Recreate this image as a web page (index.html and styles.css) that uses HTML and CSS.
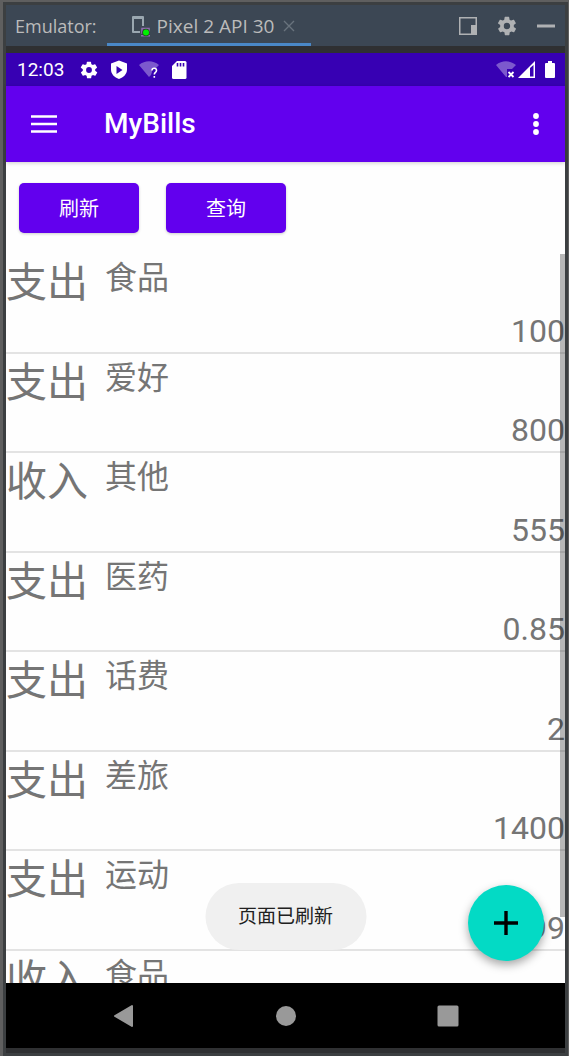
FILE: index.html
```html
<!DOCTYPE html>
<html lang="zh-CN">
<head>
<meta charset="utf-8">
<meta name="viewport" content="width=device-width, initial-scale=1">
<title>MyBills</title>
<link rel="stylesheet" href="styles.css">
</head>
<body>
<div class="window">
  <header class="toolbar">
    <span class="toolbar-title">Emulator:</span>
    <div class="tab">
      <svg class="tab-icon" width="20" height="22" viewBox="0 0 20 22" aria-hidden="true">
        <path d="M2 1h10a1 1 0 0 1 1 1v9h-2V4H3v12h6v2H2a1 1 0 0 1-1-1V2a1 1 0 0 1 1-1z" fill="#9aa7b0"/>
        <path d="M11 13.500h7v4.500h-7z" fill="none" stroke="#8f6fae" stroke-width="1.600"/>
        <path d="M10 20h9v1.500h-9z" fill="#8f6fae"/>
        <circle cx="15" cy="17.500" r="3.800" fill="#2b3a2b"/>
        <circle cx="15" cy="17.500" r="3" fill="#00f000"/>
      </svg>
      <span>Pixel 2 API 30</span>
      <button class="tool tab-close" aria-label="Close tab">
        <svg width="12" height="12" viewBox="0 0 12 12"><path d="M1 1l10 10M11 1L1 11" stroke="#69737d" stroke-width="1.400"/></svg>
      </button>
    </div>
    <div class="tools">
      <button class="tool" aria-label="Window mode">
        <svg width="18" height="18" viewBox="0 0 18 18"><path d="M.750 .750h16.500v16.500H.750z" fill="none" stroke="#afb1b3" stroke-width="1.500"/><path d="M12 8h6v10h-6z" fill="#afb1b3"/></svg>
      </button>
      <button class="tool" aria-label="Settings">
        <svg width="22" height="22" viewBox="0 0 24 24"><path fill="#afb1b3" d="M19.400 13a7.500 7.500 0 0 0 0-2l2.100-1.600a.5.5 0 0 0 .1-.6l-2-3.500a.5.500 0 0 0-.6-.2l-2.500 1a7.300 7.300 0 0 0-1.700-1l-.4-2.600a.5.500 0 0 0-.5-.5h-4a.5.500 0 0 0-.5.500l-.4 2.600a7.700 7.700 0 0 0-1.700 1l-2.500-1a.5.500 0 0 0-.6.200l-2 3.500a.5.500 0 0 0 .1.600L4.600 11a8 8 0 0 0 0 2l-2.100 1.600a.5.500 0 0 0-.1.600l2 3.500c.1.200.4.300.6.200l2.500-1c.5.400 1.100.7 1.700 1l.4 2.600c0 .3.200.5.500.5h4c.3 0 .5-.2.500-.5l.4-2.600a7.300 7.300 0 0 0 1.700-1l2.500 1c.2.100.5 0 .6-.2l2-3.500a.5.500 0 0 0-.1-.6zM12 15.500a3.500 3.500 0 1 1 0-7 3.500 3.500 0 0 1 0 7z"/></svg>
      </button>
      <button class="tool" aria-label="Minimize">
        <svg width="18" height="18" viewBox="0 0 18 18"><path d="M0 7.500h18v3H0z" fill="#afb1b3"/></svg>
      </button>
    </div>
  </header>

  <main class="device">
    <div class="status-bar">
      <span class="clock">12:03</span>
      <div class="status-icons">
        <svg width="20" height="20" viewBox="0 0 24 24"><path fill="#fff" d="M19.400 13a7.500 7.500 0 0 0 0-2l2.100-1.600a.5.500 0 0 0 .1-.6l-2-3.500a.5.500 0 0 0-.6-.2l-2.500 1a7.300 7.300 0 0 0-1.700-1l-.4-2.600a.5.500 0 0 0-.5-.5h-4a.5.500 0 0 0-.5.500l-.4 2.600a7.700 7.700 0 0 0-1.700 1l-2.500-1a.5.500 0 0 0-.6.200l-2 3.500a.5.500 0 0 0 .1.600L4.600 11a8 8 0 0 0 0 2l-2.100 1.600a.5.500 0 0 0-.1.600l2 3.500c.1.200.4.300.6.200l2.500-1c.5.400 1.100.7 1.700 1l.4 2.600c0 .3.200.5.500.5h4c.3 0 .5-.2.500-.5l.4-2.600a7.300 7.300 0 0 0 1.700-1l2.500 1c.2.100.5 0 .6-.2l2-3.500a.5.500 0 0 0-.1-.6zM12 15.500a3.500 3.500 0 1 1 0-7 3.500 3.500 0 0 1 0 7z"/></svg>
        <svg width="20" height="20" viewBox="0 0 20 20"><path fill="#fff" fill-rule="evenodd" d="M10 .5l8 3v6c0 4.500-3.500 8-8 9.500-4.500-1.500-8-5-8-9.500v-6zM7.500 6v8l6-4z"/></svg>
        <svg width="20" height="20" viewBox="0 0 20 20"><path fill="#fff" fill-opacity=".35" d="M0 5c6-5 14-5 20 0l-3 3h-4v4l-1 3-2 2z"/><path fill="none" stroke="#fff" stroke-width="1.600" d="M13 10.500c0-3 4.500-3 4.500 0 0 2-2.200 1.800-2.200 4M15.300 16v1.800"/></svg>
        <svg width="20" height="20" viewBox="0 0 20 20"><path fill="#fff" d="M8 1h8a1.500 1.500 0 0 1 1.500 1.500v15A1.500 1.500 0 0 1 16 19H4.500A1.500 1.500 0 0 1 3 17.500V6z"/><path d="M8.500 3v3.500M11.500 3v3.500M14.500 3v3.500" stroke="#3700b3" stroke-width="1.600"/></svg>
      </div>
      <div class="signal-icons">
        <svg width="20" height="20" viewBox="0 0 20 20"><path fill="#fff" fill-opacity=".35" d="M0 5c6-5 14-5 20 0l-4 4h-5v8L10 17z"/><path stroke="#fff" stroke-width="1.800" d="M12.500 12l5 5M17.500 12l-5 5"/></svg>
        <svg width="18" height="20" viewBox="0 0 18 20"><path fill="#fff" fill-rule="evenodd" d="M17 1v17H0zM12 8v8.500h3.500V5z"/></svg>
        <svg class="battery" width="10" height="20" viewBox="0 0 10 20"><path fill="#fff" d="M3 1h4v2h2a1 1 0 0 1 1 1v13a1 1 0 0 1-1 1H1a1 1 0 0 1-1-1V4a1 1 0 0 1 1-1h2z"/></svg>
      </div>
    </div>

    <div class="app-bar">
      <button class="icon-button" aria-label="Menu">
        <svg width="26" height="20" viewBox="0 0 26 20"><path d="M0 2.500h26M0 10h26M0 17.500h26" stroke="#fff" stroke-width="2.400"/></svg>
      </button>
      <h1 class="app-title">MyBills</h1>
      <button class="icon-button" aria-label="More options">
        <svg width="8" height="24" viewBox="0 0 8 24"><g fill="#fff"><circle cx="4" cy="4" r="2.900"/><circle cx="4" cy="12" r="2.900"/><circle cx="4" cy="20" r="2.900"/></g></svg>
      </button>
    </div>

    <section class="content">
      <div class="actions">
        <button class="action">刷新</button>
        <button class="action">查询</button>
      </div>
      <div class="list-pane">
        <ul class="bills">
          <li class="bill"><span class="kind">支出</span><span class="category">食品</span><span class="amount">100</span></li>
          <li class="bill"><span class="kind">支出</span><span class="category">爱好</span><span class="amount">800</span></li>
          <li class="bill"><span class="kind">收入</span><span class="category">其他</span><span class="amount">555</span></li>
          <li class="bill"><span class="kind">支出</span><span class="category">医药</span><span class="amount">0.85</span></li>
          <li class="bill"><span class="kind">支出</span><span class="category">话费</span><span class="amount">2</span></li>
          <li class="bill"><span class="kind">支出</span><span class="category">差旅</span><span class="amount">1400</span></li>
          <li class="bill"><span class="kind">支出</span><span class="category">运动</span><span class="amount">99</span></li>
          <li class="bill"><span class="kind">收入</span><span class="category">食品</span></li>
        </ul>
        <div class="scroll-thumb"></div>
      </div>
      <div class="toast" role="status">页面已刷新</div>
      <button class="fab" aria-label="Add bill">
        <svg width="24" height="24" viewBox="0 0 24 24"><path d="M0 12h24M12 0v24" stroke="#000" stroke-width="3.400"/></svg>
      </button>
    </section>

    <nav class="nav-bar">
      <button class="icon-button" aria-label="Back">
        <svg width="22" height="24" viewBox="0 0 22 24"><path d="M19 2v20L2 12z" fill="#999" stroke="#999" stroke-width="2" stroke-linejoin="round"/></svg>
      </button>
      <button class="icon-button" aria-label="Home">
        <svg width="22" height="22" viewBox="0 0 22 22"><circle cx="11" cy="11" r="10" fill="#999"/></svg>
      </button>
      <button class="icon-button" aria-label="Overview">
        <svg width="22" height="22" viewBox="0 0 22 22"><rect x=".5" y=".5" width="21" height="21" rx="1.500" fill="#999"/></svg>
      </button>
    </nav>
  </main>
</div>
</body>
</html>
```
FILE: styles.css
```css
* {
  box-sizing: border-box;
}

body {
  margin: 0;
  font-family: Roboto, "Noto Sans CJK SC", sans-serif;
  background: #3c3f41;
}

button {
  border: 0;
  padding: 0;
  background: none;
  font: inherit;
  cursor: pointer;
}

svg {
  display: block;
}

.window {
  display: flex;
  flex-direction: column;
  height: 100vh;
  padding: 3px;
  border: 1px solid #5f5f5f;
  border-width: 2px 1px 0 3px;
}

.toolbar {
  display: flex;
  flex: none;
  height: 41px;
  padding-left: 9px;
  background: #3c4754;
  color: #bbbbbb;
  font-family: "Open Sans", sans-serif;
  font-size: 18px;
  line-height: 42px;
}

.tab {
  display: flex;
  align-items: center;
  gap: 6px;
  margin-left: 10px;
  padding: 0 16px 0 24px;
  box-shadow: inset 0 -3px #4a88c7;
  font-size: 19px;
}

.tab-close {
  margin-left: 3px;
}

.tools {
  display: flex;
  align-items: center;
  gap: 19px;
  margin-left: auto;
  padding-right: 10px;
}

.device {
  display: flex;
  flex: 1;
  flex-direction: column;
  min-height: 0;
  border: solid #2f3032;
  border-width: 7px 0 5px;
}

.status-bar {
  display: flex;
  flex: none;
  align-items: center;
  height: 33px;
  padding: 0 10px 0 11px;
  background: #3700b3;
  color: #fff;
  font-size: 19px;
}

.status-icons {
  display: flex;
  gap: 10px;
  margin-left: 15px;
}

.signal-icons {
  display: flex;
  margin-left: auto;
}

.signal-icons > * + * {
  margin-left: 2px;
}

.signal-icons .battery {
  margin-left: 9px;
}

.app-bar {
  position: relative;
  z-index: 1;
  display: flex;
  flex: none;
  align-items: center;
  height: 76px;
  padding: 0 25px;
  background: #6200ee;
  box-shadow: 0 1px 4px rgba(0, 0, 0, 0.2);
  color: #fff;
}

.app-title {
  flex: 1;
  margin: 0;
  padding-left: 47px;
  font-size: 28px;
  font-weight: 500;
  line-height: 76px;
}

.content {
  position: relative;
  display: flex;
  flex: 1;
  flex-direction: column;
  min-height: 0;
  background: #fefefe;
}

.actions {
  display: flex;
  flex: none;
  gap: 27px;
  padding: 21px 13px;
}

.action {
  width: 120px;
  height: 50px;
  padding-bottom: 2px;
  border-radius: 5px;
  background: #6200ee;
  box-shadow: 0 1px 3px rgba(0, 0, 0, 0.2);
  color: #fff;
  font-size: 20px;
}

.list-pane {
  position: relative;
  flex: 1;
  min-height: 0;
  overflow: hidden;
}

.bills {
  margin: 0;
  padding: 0;
  list-style: none;
  color: #757575;
}

.bill {
  display: flex;
  height: 100px;
  border-bottom: 2px solid #e3e3e3;
}

.bill:nth-child(even) {
  height: 99px;
}

.kind {
  width: 99px;
  font-size: 41px;
  line-height: 58px;
}

.category {
  font-size: 32px;
  line-height: 48px;
}

.amount {
  align-self: flex-end;
  margin-left: auto;
  font-size: 32px;
  line-height: 42px;
}

.scroll-thumb {
  position: absolute;
  top: 0;
  right: 0;
  width: 5px;
  height: 91%;
  background: rgba(0, 0, 0, 0.28);
}

.toast {
  position: absolute;
  bottom: 33px;
  left: 50%;
  transform: translateX(-50%);
  padding: 0 33px;
  border-radius: 34px;
  background: #f0f0f0;
  color: #202020;
  font-size: 19px;
  line-height: 67px;
  white-space: nowrap;
}

.fab {
  position: absolute;
  right: 21px;
  bottom: 22px;
  display: grid;
  place-items: center;
  width: 76px;
  height: 76px;
  border-radius: 50%;
  background: #03dac5;
  box-shadow: 0 4px 10px rgba(0, 0, 0, 0.35);
}

.nav-bar {
  display: flex;
  flex: none;
  align-items: center;
  justify-content: center;
  gap: 140px;
  height: 65px;
  background: #000;
}
```
